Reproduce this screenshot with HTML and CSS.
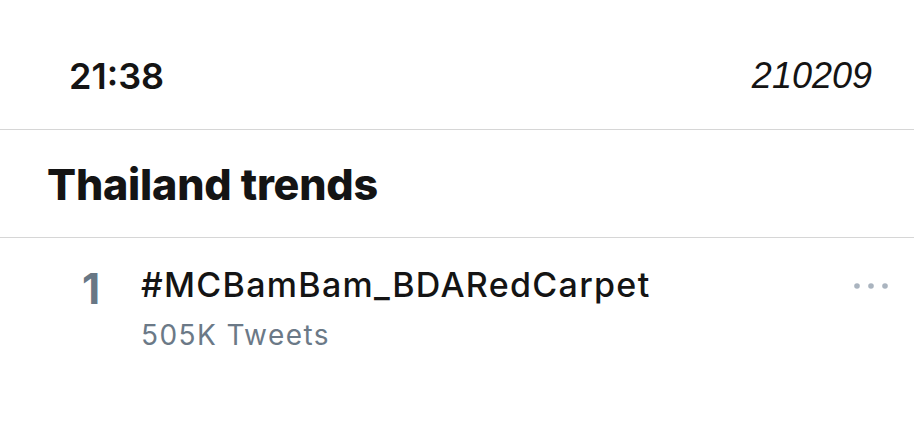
FILE: index.html
```html
<!DOCTYPE html>
<html>
<head>
<meta charset="utf-8">
<link rel="stylesheet" href="styles.css">
</head>
<body>
<div class="screen">
  <div class="status">
    <span class="time">21:38</span>
    <span class="date">210209</span>
  </div>
  <div class="header">
    <h1 class="title">Thailand trends</h1>
  </div>
  <div class="trend">
    <div class="rank">1</div>
    <div class="info">
      <div class="tag">#MCBamBam_BDARedCarpet</div>
      <div class="count">505K Tweets</div>
    </div>
    <div class="more">
      <svg width="34" height="8" viewBox="0 0 34 8"><circle cx="3" cy="4" r="2.8" fill="#aab4bf"/><circle cx="17" cy="4" r="2.8" fill="#aab4bf"/><circle cx="31" cy="4" r="2.8" fill="#aab4bf"/></svg>
    </div>
  </div>
</div>
</body>
</html>
```

FILE: styles.css
```css
html, body {
  margin: 0;
  padding: 0;
  background: #fff;
}
body {
  width: 914px;
  height: 424px;
  overflow: hidden;
  font-family: Inter, "Liberation Sans", sans-serif;
  color: #141414;
}
.status {
  display: flex;
  justify-content: space-between;
  align-items: flex-start;
  height: 130px;
  padding: 54px 42px 0 69px;
  box-sizing: border-box;
  border-bottom: 1.5px solid #d6d6d6;
}
.time {
  font-size: 36px;
  font-weight: 600;
  line-height: 44px;
}
.date {
  font-family: "Liberation Sans", Arial, sans-serif;
  font-style: italic;
  font-size: 36px;
  line-height: 44px;
}
.header {
  height: 108px;
  padding: 0 0 0 47px;
  box-sizing: border-box;
  border-bottom: 1.5px solid #d6d6d6;
}
.title {
  margin: 0;
  padding-top: 28px;
  font-size: 43px;
  font-weight: 800;
  line-height: 52px;
  letter-spacing: -0.2px;
}
.trend {
  display: flex;
  align-items: flex-start;
  padding: 27px 26px 0 82px;
}
.rank {
  width: 59px;
  font-size: 42px;
  font-weight: 700;
  line-height: 48px;
  color: #687785;
}
.info {
  flex: 1;
}
.tag {
  font-size: 34px;
  font-weight: 500;
  line-height: 40px;
  letter-spacing: 1.3px;
}
.count {
  margin-top: 13px;
  font-size: 28px;
  line-height: 34px;
  letter-spacing: 1.4px;
  color: #6b7987;
}
.more {
  padding-top: 17px;
  line-height: 0;
}
```
